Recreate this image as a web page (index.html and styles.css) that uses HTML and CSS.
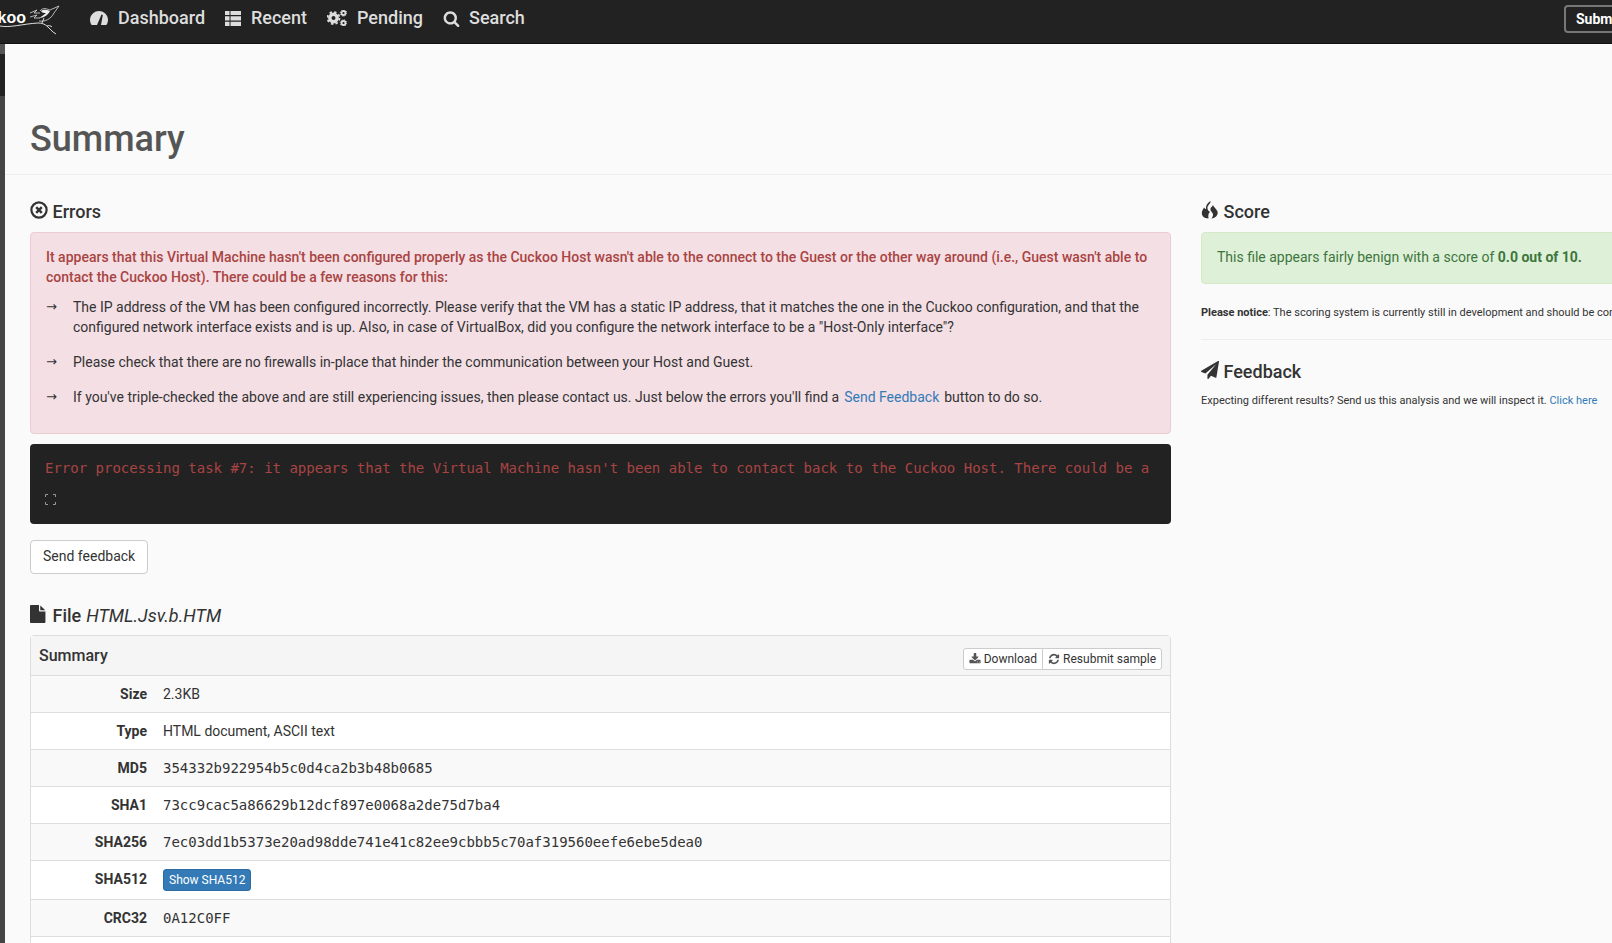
FILE: index.html
```html
<!DOCTYPE html>
<html lang="en">
<head>
<meta charset="utf-8">
<title>Summary</title>
<link rel="stylesheet" href="styles.css">
</head>
<body>
<nav class="nav">
  <a class="brand"><span class="brand-text">cuckoo</span>
    <svg class="bird" viewBox="0 0 32 32" width="32" height="32" fill="none" stroke="#ddd" stroke-width="0.8">
      <path d="M2 11 L9 8 L6 11 L12 11 M2 15 L9 13 L6 16 L12 16 M12 9 C15 5 19 7 22 8 L31 4 L26 11 C23 17 17 20 11 19"/>
      <path d="M-28 24 C-18 26 -6 22 10 21 C14 21 17 22 20 25 L25 30 L28 32 M14 21 L16 16 M19 24 C21 23 23 24 24 25" stroke-width="1"/>
      <path d="M13 9 C16 7 19 8 22 9 C20 13 16 16 11 16 C14 14 16 13 18 11 C16 11 14 11 13 9 Z" fill="#eee" stroke="none"/>
    </svg>
  </a>
  <ul class="nav-list">
    <li class="nav-item nav-dash"><svg class="nav-icon" viewBox="0 0 18 16" width="18" height="16"><path fill-rule="evenodd" d="M1.600 15 A9 9 0 1 1 16.400 15 Z M7 15 L11.500 4.500 L12.800 5 L11 15 Z" fill="#ddd"/></svg>Dashboard</li>
    <li class="nav-item nav-recent"><svg class="nav-icon" viewBox="0 0 16 15" width="16" height="15"><path d="M0 0h4.500v4H0zM5.500 0H16v4H5.500zM0 5.300h4.500v4.200H0zM5.500 5.300H16v4.200H5.500zM0 10.800h4.500V15H0zM5.500 10.800H16V15H5.500z" fill="#ddd"/></svg>Recent</li>
    <li class="nav-item nav-pend"><svg class="nav-icon" viewBox="0 0 20 16" width="20" height="16"><g fill="none" stroke="#ddd"><circle cx="6.500" cy="8" r="3.700" stroke-width="3.400"/><circle cx="6.500" cy="8" r="6" stroke-width="1.800" stroke-dasharray="2.400 2.300"/><circle cx="16.500" cy="3" r="2" stroke-width="1.800"/><circle cx="16.500" cy="13" r="2" stroke-width="1.800"/><circle cx="16.500" cy="3" r="3.200" stroke-width="1" stroke-dasharray="1.200 1.300"/><circle cx="16.500" cy="13" r="3.200" stroke-width="1" stroke-dasharray="1.200 1.300"/></g></svg>Pending</li>
    <li class="nav-item nav-search"><svg class="nav-icon" viewBox="0 0 1792 1792" width="17" height="17"><path fill="#ddd" d="M1216 832q0-185-131.500-316.500t-316.500-131.500-316.500 131.500-131.500 316.500 131.500 316.500 316.500 131.500 316.500-131.500 131.500-316.500zm512 832q0 52-38 90t-90 38q-54 0-90-38l-343-342q-179 124-399 124-143 0-273.500-55.500t-225-150-150-225-55.500-273.500 55.500-273.500 150-225 225-150 273.500-55.500 273.500 55.500 225 150 150 225 55.500 273.500q0 220-124 399l343 343q37 37 37 90z"/></svg>Search</li>
  </ul>
  <a class="submit">Submit</a>
</nav>
<div class="layout">
  <aside class="rail"><i class="rail-a"></i><i class="rail-b"></i></aside>
  <main class="main">
    <header class="page-header"><h1>Summary</h1></header>
    <div class="columns">
      <section class="col-left">
        <h4 class="heading"><svg class="h-icon" viewBox="0 0 18 18" width="18" height="18"><circle cx="9" cy="9" r="7.600" fill="none" stroke="#333" stroke-width="2.200"/><path d="M6.200 6.200l5.600 5.600M11.800 6.200l-5.600 5.600" stroke="#333" stroke-width="2.400"/></svg>Errors</h4>
        <div class="alert alert-danger">
          <p class="alert-lead">It appears that this Virtual Machine hasn't been configured properly as the Cuckoo Host wasn't able to the connect to the Guest or the other way around (i.e., Guest wasn't able to contact the Cuckoo Host). There could be a few reasons for this:</p>
          <ul class="reasons">
            <li>The IP address of the VM has been configured incorrectly. Please verify that the VM has a static IP address, that it matches the one in the Cuckoo configuration, and that the configured network interface exists and is up. Also, in case of VirtualBox, did you configure the network interface to be a "Host-Only interface"?</li>
            <li>Please check that there are no firewalls in-place that hinder the communication between your Host and Guest.</li>
            <li>If you've triple-checked the above and are still experiencing issues, then please contact us. Just below the errors you'll find a <a class="link link-inline">Send Feedback</a> button to do so.</li>
          </ul>
        </div>
        <div class="console">
          <div class="console-line">Error processing task #7: it appears that the Virtual Machine hasn't been able to contact back to the Cuckoo Host. There could be a</div>
          <svg class="expand" viewBox="0 0 11 11" width="11" height="11" fill="none" stroke="#999" stroke-width="1"><path d="M.5 3V.5H3M8 .5h2.500V3M10.500 8v2.500H8M3 10.500H.5V8"/></svg>
        </div>
        <a class="btn">Send feedback</a>
        <h4 class="heading heading-file"><svg class="h-icon" viewBox="0 0 1792 1792" width="18" height="18"><path fill="#333" transform="translate(-128 0)" d="M1152 512v-472q22 14 36 28l408 408q14 14 28 36h-472zm-128 32q0 40 28 68t68 28h544v1056q0 40-28 68t-68 28h-1344q-40 0-68-28t-28-68v-1600q0-40 28-68t68-28h800v544z"/></svg>File <em class="filename">HTML.Jsv.b.HTM</em></h4>
        <div class="panel">
          <div class="panel-heading">
            <span class="panel-title">Summary</span>
            <div class="btn-group">
              <a class="btn-xs"><svg viewBox="0 0 1792 1792" width="12" height="12"><path fill="#555" d="M1344 1344q0-26-19-45t-45-19-45 19-19 45 19 45 45 19 45-19 19-45zm256 0q0-26-19-45t-45-19-45 19-19 45 19 45 45 19 45-19 19-45zm128-224v320q0 40-28 68t-68 28h-1472q-40 0-68-28t-28-68v-320q0-40 28-68t68-28h465l135 136q58 56 136 56t136-56l136-136h464q40 0 68 28t28 68zm-325-569q17 41-14 70l-448 448q-18 19-45 19t-45-19l-448-448q-31-29-14-70 17-39 59-39h256v-448q0-26 19-45t45-19h256q26 0 45 19t19 45v448h256q42 0 59 39z"/></svg> Download</a>
              <a class="btn-xs"><svg viewBox="0 0 1792 1792" width="12" height="12"><path fill="#555" d="M1639 1056q0 5-1 7-64 268-268 434.500t-478 166.500q-146 0-282.500-55t-243.500-157l-129 129q-19 19-45 19t-45-19-19-45v-448q0-26 19-45t45-19h448q26 0 45 19t19 45-19 45l-137 137q71 66 161 102t187 36q134 0 250-65t186-179q11-17 53-117 8-23 30-23h192q13 0 22.500 9.500t9.500 22.500zm25-800v448q0 26-19 45t-45 19h-448q-26 0-45-19t-19-45 19-45l138-138q-148-137-349-137-134 0-250 65t-186 179q-11 17-53 117-8 23-30 23h-199q-13 0-22.500-9.500t-9.500-22.500v-7q65-268 270-434.500t480-166.500q146 0 284 55.500t245 156.500l130-129q19-19 45-19t45 19 19 45z"/></svg> Resubmit sample</a>
            </div>
          </div>
          <table class="info">
            <tr><th>Size</th><td>2.3KB</td></tr>
            <tr><th>Type</th><td>HTML document, ASCII text</td></tr>
            <tr><th>MD5</th><td class="mono">354332b922954b5c0d4ca2b3b48b0685</td></tr>
            <tr><th>SHA1</th><td class="mono">73cc9cac5a86629b12dcf897e0068a2de75d7ba4</td></tr>
            <tr><th>SHA256</th><td class="mono">7ec03dd1b5373e20ad98dde741e41c82ee9cbbb5c70af319560eefe6ebe5dea0</td></tr>
            <tr><th>SHA512</th><td><a class="btn-primary">Show SHA512</a></td></tr>
            <tr><th>CRC32</th><td class="mono">0A12C0FF</td></tr>
            <tr><th>&nbsp;</th><td>&nbsp;</td></tr>
          </table>
        </div>
      </section>
      <section class="col-right">
        <h4 class="heading"><svg class="h-icon" viewBox="0 0 18 18" width="18" height="18"><path fill="#333" d="M9.500 0C10 3 6 4 6.500 7.500 6.700 9.500 8 10 9 11 7.500 12 7 14 7.500 17.500 3 17.500.5 14.500.8 11.500 1 9 2.500 8 3 6.500 4 7.500 4.500 8 5 8 4.500 5 6 2 9.500 0Z"/><path fill="#333" d="M12 4C12.500 6 15.500 8 16.500 10.500 17.500 14 14.500 17 10.500 17.500 11.500 16 12.800 14 11.500 12 10.500 10.500 9 9.500 9.500 7.500 10 6 11.500 5.500 12 4Z"/></svg>Score</h4>
        <div class="alert alert-success">This file appears fairly benign with a score of <strong>0.0 out of 10.</strong></div>
        <p class="small notice"><strong>Please notice</strong>: The scoring system is currently still in development and should be considered experimental.</p>
        <hr class="rule">
        <h4 class="heading heading-feedback"><svg class="h-icon" viewBox="0 0 1792 1792" width="18" height="18"><path fill="#333" d="M1764 11q33 24 27 64l-256 1536q-5 29-32 45-14 8-31 8-11 0-24-5l-453-185-242 295q-18 23-49 23-13 0-22-4-19-7-30.500-23.500t-11.500-36.500v-349l864-1059-1069 925-395-162q-37-14-40-55-2-40 32-59l1664-960q15-9 32-9 20 0 36 11z"/></svg>Feedback</h4>
        <p class="small">Expecting different results? Send us this analysis and we will inspect it. <a class="link">Click here</a></p>
      </section>
    </div>
  </main>
</div>
</body>
</html>
```
FILE: styles.css
```css
* { box-sizing: border-box; }
html, body { height: 100%; margin: 0; overflow: hidden; }
body { width: 1612px; height: 943px; background: #fafafa; color: #333; font: 14px/20px Roboto, "Liberation Sans", sans-serif; display: flex; flex-direction: column; }
a { text-decoration: none; }
p, ul, h1, h4 { margin: 0; padding: 0; }
ul { list-style: none; }

.nav { flex: 0 0 44px; display: flex; align-items: flex-start; background: #222; border-bottom: 1px solid #111; }
.brand { flex: 0 0 60px; width: 60px; height: 36px; display: flex; justify-content: flex-end; align-items: center; overflow: hidden; }
.brand-text { color: #fff; font: bold 16px/18px "Liberation Sans", sans-serif; margin-right: 2px; }
.bird { flex: 0 0 32px; overflow: visible; }
.nav-list { display: flex; margin-left: 30px; }
.nav-item { display: flex; align-items: center; height: 36px; color: #ddd; font-size: 18px; font-weight: 500; line-height: 36px; }
.nav-icon { flex: none; margin-right: 10px; }
.nav-dash { width: 135px; }
.nav-recent { width: 102px; }
.nav-pend { width: 116px; }
.nav-search .nav-icon { margin-right: 9px; }
.submit { margin-left: auto; margin-right: -60px; margin-top: 5px; width: 108px; height: 28px; border: 2px solid #777; border-radius: 4px; color: #fff; font-weight: 700; line-height: 24px; padding-left: 10px; }

.layout { flex: 1; display: flex; min-height: 0; }
.rail { flex: 0 0 5px; background: #444; display: flex; flex-direction: column; }
.rail-a { flex: 0 0 10px; background: #555; }
.rail-b { flex: 0 0 42px; background: #222; }
.main { flex: 1; min-width: 0; overflow: hidden; }
.page-header { height: 131px; padding: 75px 0 0 25px; border-bottom: 1px solid #eee; }
h1 { color: #555; font-size: 36px; line-height: 40px; font-weight: 500; }
.columns { display: flex; gap: 30px; padding: 27px 0 0 25px; }
.col-left { flex: 0 0 1141px; }
.col-right { flex: 0 0 600px; }

.heading { display: flex; align-items: center; height: 20px; font-size: 18px; line-height: 20px; font-weight: 500; color: #333; margin-bottom: 10px; }
.h-icon { flex: none; margin: -5px 4.500px 0 0; width: 18px; }
.heading-file { margin-top: 32px; margin-bottom: 9px; }
.heading-feedback { margin-bottom: 11px; }
.filename { font-weight: 400; margin-left: 5px; }

.alert { border: 1px solid; border-radius: 4px; padding: 14px 15px; }
.alert-danger { background: #f4dfe5; border-color: #ebccd1; height: 202px; }
.alert-lead { color: #a94442; font-weight: 500; margin-bottom: 10px; }
.reasons li { position: relative; padding-left: 27px; margin-bottom: 15px; color: #333; }
.reasons li::before { content: "→"; position: absolute; left: 0; top: 0; font-family: "DejaVu Sans", sans-serif; font-size: 13px; }
.link { color: #337ab7; }
.link-inline { margin: 0 1.500px; }

.console { margin-top: 10px; height: 80px; background: #222; border-radius: 4px; padding: 14px 15px 0; overflow: hidden; }
.console-line { font: 14px/20px "DejaVu Sans Mono", monospace; color: #a94442; white-space: nowrap; overflow: hidden; width: 1105px; }
.expand { display: block; margin-top: 16px; }
.btn { display: inline-block; margin-top: 16px; height: 34px; padding: 5px 12px; background: #fff; border: 1px solid #ccc; border-radius: 4px; color: #333; }

.panel { border: 1px solid #ddd; border-radius: 4px; background: #fff; }
.panel-heading { display: flex; justify-content: space-between; align-items: center; height: 40px; padding: 0 8px; background: #f5f5f5; border-bottom: 1px solid #ddd; }
.panel-title { font-size: 16px; font-weight: 500; margin-top: 1px; }
.btn-group { display: flex; margin-top: 6px; }
.btn-xs { display: flex; align-items: center; gap: 3px; height: 22px; padding: 0 5px; background: #fff; border: 1px solid #ccc; font-size: 12px; line-height: 18px; color: #333; }
.btn-xs:first-child { border-radius: 3px 0 0 3px; }
.btn-xs:last-child { border-radius: 0 3px 3px 0; margin-left: -1px; }

.info { width: 100%; border-collapse: collapse; }
.info th, .info td { padding: 8px; line-height: 20px; border-bottom: 1px solid #ddd; text-align: left; vertical-align: top; }
.info th { width: 124px; text-align: right; font-weight: 700; }
.info tr:nth-child(odd) { background: #f9f9f9; }
.info tr:last-child { background: #fff; }
.mono { font-family: "DejaVu Sans Mono", monospace; }
.btn-primary { display: inline-block; height: 22px; padding: 0 5px; background: #337ab7; border: 1px solid #2e6da4; border-radius: 3px; color: #fff; font-size: 12px; line-height: 21px; vertical-align: top; }

.alert-success { background: #dff0d8; border-color: #d6e9c6; color: #3c763d; height: 52px; }
.alert-success strong { font-weight: 700; }
.small { font-size: 11px; line-height: 16px; white-space: nowrap; color: #333; }
.notice { margin-top: 21px; }
.rule { margin: 18px 0 22px; border: 0; border-top: 1px solid #eee; }
```
